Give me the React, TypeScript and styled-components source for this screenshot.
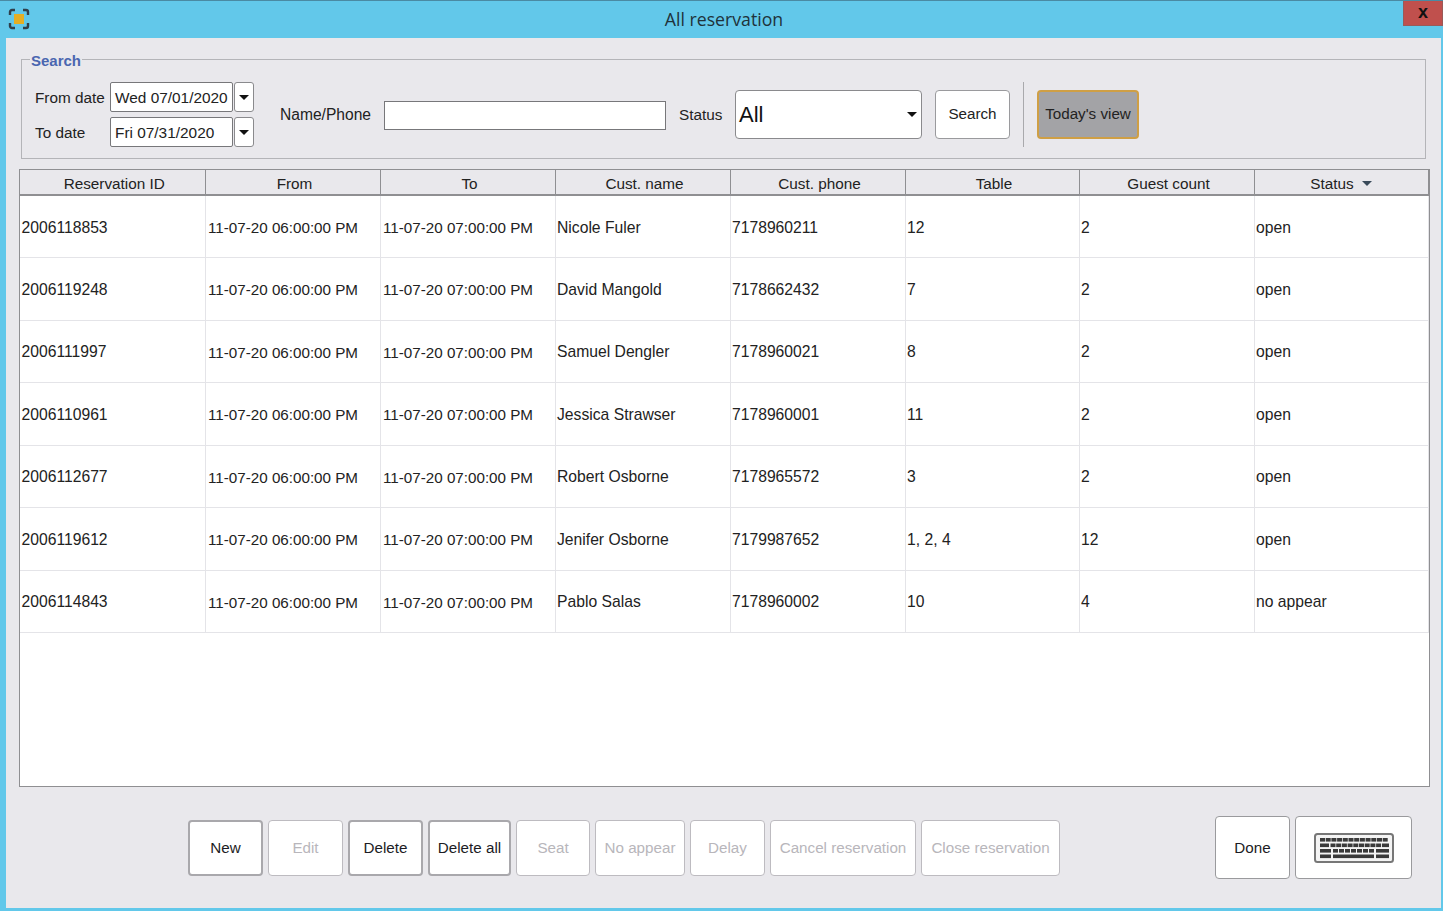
import React from "react";
import styled, { createGlobalStyle, css } from "styled-components";

const GlobalStyle = createGlobalStyle`
  html, body {
    margin: 0;
    padding: 0;
    background: #62c8ea;
    font-family: "Liberation Sans", Arial, sans-serif;
  }
`;

const Window = styled.div`
  width: 1443px;
  height: 911px;
  display: flex;
  flex-direction: column;
  box-sizing: border-box;
  background: #62c8ea;
  overflow: hidden;
`;

const TitleBar = styled.div`
  height: 38px;
  flex: none;
  box-sizing: border-box;
  border-top: 1px solid #4a8aa3;
  display: grid;
  grid-template-columns: 1fr auto 1fr;
  align-items: start;
`;

const TitleIcon = styled.svg`
  display: block;
  margin: 7px 0 0 8px;
`;

const Title = styled.div`
  font-family: "Open Sans", sans-serif;
  font-size: 17.7px;
  line-height: 36px;
  color: #20323a;
  padding-left: 5px;
`;

const CloseButton = styled.div`
  justify-self: end;
  width: 40px;
  height: 25px;
  background: #c0504d;
  border: 1px solid #9a5a58;
  border-top: none;
  box-sizing: border-box;
  color: #111;
  font-size: 18px;
  font-weight: 700;
  line-height: 22px;
  text-align: center;
`;

const Panel = styled.div`
  flex: 1;
  margin: 0 2px 3px 6px;
  background: #e9e8ec;
  display: flex;
  flex-direction: column;
  padding: 10px 11px 0 13px;
  min-height: 0;
`;

const SearchGroup = styled.fieldset`
  margin: 0 4px 0 2px;
  padding: 0 0 0 13px;
  height: 111px;
  box-sizing: border-box;
  border: 1px solid #b4b4b8;
  display: flex;
  align-items: flex-start;
  min-width: 0;
`;

const SearchLegend = styled.legend`
  margin-left: -5px;
  padding: 4px 1px 0;
  color: #4a66b0;
  font-size: 15px;
  font-weight: 700;
  line-height: 18px;
`;

const SearchRow = styled.div`
  display: flex;
  align-items: center;
  height: 65px;
  margin-top: 12px;
`;

const DateGrid = styled.div`
  display: grid;
  grid-template-columns: 75px 123px 21px;
  grid-auto-rows: 30px;
  row-gap: 5px;
  align-items: center;
  width: 245px;
`;

const Label = styled.span`
  font-size: 15.3px;
  color: #222;
  white-space: nowrap;
`;

const DateLabel = styled(Label)`
  padding-top: 2px;
`;

const DateField = styled.div`
  height: 30px;
  box-sizing: border-box;
  background: #fff;
  border: 1px solid #77777a;
  border-radius: 2px;
  padding-left: 4px;
  font-size: 15.4px;
  line-height: 30px;
  color: #222;
  white-space: nowrap;
`;

const Caret = styled.span`
  width: 0;
  height: 0;
  border-left: 5px solid transparent;
  border-right: 5px solid transparent;
  border-top: 5px solid #111;
`;

const DateArrow = styled.div`
  height: 30px;
  box-sizing: border-box;
  margin-left: 1px;
  background: #fff;
  border: 1px solid #8a8a8d;
  border-radius: 3px;
  display: flex;
  align-items: center;
  justify-content: center;
`;

const NameLabel = styled(Label)`
  width: 104px;
  font-size: 15.6px;
`;

const NameInput = styled.div`
  width: 282px;
  height: 29px;
  box-sizing: border-box;
  background: #fff;
  border: 1px solid #77777a;
  margin-top: 1px;
`;

const StatusLabel = styled(Label)`
  width: 56px;
  margin-left: 13px;
`;

const StatusSelect = styled.div`
  width: 187px;
  height: 49px;
  box-sizing: border-box;
  background: #fff;
  border: 1px solid #8a8a8d;
  border-radius: 4px;
  padding: 0 4px 0 3px;
  display: flex;
  align-items: center;
  justify-content: space-between;
  font-size: 22px;
  color: #111;
`;

const buttonBase = css`
  box-sizing: border-box;
  background: #fff;
  border-radius: 4px;
  display: flex;
  align-items: center;
  justify-content: center;
  font-size: 15.2px;
  white-space: nowrap;
`;

const SearchButton = styled.div`
  ${buttonBase}
  width: 75px;
  height: 49px;
  margin-left: 13px;
  padding-bottom: 2px;
  border: 1px solid #9a9a9d;
  color: #222;
`;

const Divider = styled.div`
  width: 1px;
  height: 65px;
  background: #a9a9ac;
  margin: 0 13px;
`;

const TodayButton = styled.div`
  ${buttonBase}
  width: 102px;
  height: 49px;
  padding-bottom: 2px;
  background: #a3a3a6;
  border: 2px solid #cf9f45;
  color: #222;
`;

const TableFrame = styled.div`
  margin-top: 10px;
  height: 618px;
  flex: none;
  box-sizing: border-box;
  background: #fff;
  border: 1px solid #8f8f92;
`;

const Table = styled.table`
  width: 1408px;
  table-layout: fixed;
  border-collapse: collapse;
`;

const HeadCell = styled.th`
  height: 25px;
  padding: 4px 0 0 4px;
  box-sizing: border-box;
  background: #e9e8ec;
  border-right: 1px solid #8f8f92;
  border-bottom: 2px solid #8f8f92;
  font-size: 15.3px;
  font-weight: 400;
  color: #222;
  text-align: center;

  &:last-child {
    padding-left: 0;
  }
`;

const SortCaret = styled.span`
  display: inline-block;
  width: 0;
  height: 0;
  margin: 0 0 3px 8px;
  border-left: 5px solid transparent;
  border-right: 5px solid transparent;
  border-top: 5px solid #3a4a5a;
`;

const Cell = styled.td<{ $time?: boolean }>`
  height: 62.5px;
  padding: 2px 0 0 ${(p) => (p.$time ? "2.5px" : "1.5px")};
  box-sizing: border-box;
  border-right: 1px solid #e4e4e8;
  border-bottom: 1px solid #e4e4e8;
  font-size: ${(p) => (p.$time ? "15.2px" : "15.7px")};
  color: #222;
  white-space: nowrap;
  overflow: hidden;
`;

const Footer = styled.div`
  flex: 1;
  display: flex;
  align-items: center;
  padding: 0 18px 0 169px;
`;

const ActionGroup = styled.div`
  display: flex;
  gap: 5px;
`;

const ActionButton = styled.div<{ $width: number; $disabled?: boolean }>`
  ${buttonBase}
  width: ${(p) => p.$width}px;
  height: 56px;
  border: ${(p) => (p.$disabled ? "1px solid #bdbbc0" : "2px solid #a9a8ac")};
  color: ${(p) => (p.$disabled ? "#b8b6bb" : "#1c1c24")};
`;

const SideGroup = styled.div`
  margin-left: auto;
  display: flex;
  gap: 5px;
`;

const SideButton = styled.div<{ $width: number }>`
  ${buttonBase}
  width: ${(p) => p.$width}px;
  height: 63px;
  border: 1px solid #9a9a9d;
  color: #1c1c24;
`;

const columns = [
  { title: "Reservation ID", width: 185 },
  { title: "From", width: 175 },
  { title: "To", width: 175 },
  { title: "Cust. name", width: 175 },
  { title: "Cust. phone", width: 175 },
  { title: "Table", width: 174 },
  { title: "Guest count", width: 175 },
  { title: "Status", width: 174 },
];

const FROM = "11-07-20 06:00:00 PM";
const TO = "11-07-20 07:00:00 PM";

const rows = [
  ["2006118853", FROM, TO, "Nicole Fuler", "7178960211", "12", "2", "open"],
  ["2006119248", FROM, TO, "David Mangold", "7178662432", "7", "2", "open"],
  ["2006111997", FROM, TO, "Samuel Dengler", "7178960021", "8", "2", "open"],
  ["2006110961", FROM, TO, "Jessica Strawser", "7178960001", "11", "2", "open"],
  ["2006112677", FROM, TO, "Robert Osborne", "7178965572", "3", "2", "open"],
  ["2006119612", FROM, TO, "Jenifer Osborne", "7179987652", "1, 2, 4", "12", "open"],
  ["2006114843", FROM, TO, "Pablo Salas", "7178960002", "10", "4", "no appear"],
];

const actions = [
  { label: "New", width: 75 },
  { label: "Edit", width: 75, disabled: true },
  { label: "Delete", width: 75 },
  { label: "Delete all", width: 83 },
  { label: "Seat", width: 74, disabled: true },
  { label: "No appear", width: 90, disabled: true },
  { label: "Delay", width: 75, disabled: true },
  { label: "Cancel reservation", width: 146, disabled: true },
  { label: "Close reservation", width: 139, disabled: true },
];

const WindowIcon = () => (
  <TitleIcon width="22" height="22" viewBox="0 0 22 22" fill="none">
    <rect x="6" y="6" width="10" height="10" fill="#e5ae24" />
    <path
      d="M7 2H4a2 2 0 0 0-2 2v3M15 2h3a2 2 0 0 1 2 2v3M7 20H4a2 2 0 0 1-2-2v-3M15 20h3a2 2 0 0 0 2-2v-3"
      stroke="#2f3f4c"
      strokeWidth="2.4"
    />
  </TitleIcon>
);

const keyRow = (y: number, x: number, count: number, w: number, step: number) =>
  Array.from({ length: count }, (_, i) => (
    <rect key={`${y}-${i}`} x={x + i * step} y={y} width={w} height="3.6" />
  ));

const KeyboardIcon = () => (
  <svg width="80" height="30" viewBox="0 0 80 30">
    <rect x="1" y="1" width="78" height="28" rx="2.5" fill="#f4f4f4" stroke="#777" strokeWidth="2" />
    <g fill="#3a3a3a">
      {keyRow(5, 6, 12, 5, 5.7)}
      <rect x="6" y="10.5" width="9" height="3.6" />
      {keyRow(10.5, 16.5, 9, 5, 5.7)}
      <rect x="68" y="10.5" width="7" height="3.6" />
      <rect x="6" y="16" width="11" height="3.6" />
      {keyRow(16, 19, 7, 5, 6)}
      <rect x="62" y="16" width="13" height="3.6" />
      <rect x="6" y="21.5" width="11" height="3.6" />
      <rect x="19" y="21.5" width="41" height="3.6" />
      <rect x="62" y="21.5" width="13" height="3.6" />
    </g>
  </svg>
);

export default function App() {
  return (
    <Window>
      <GlobalStyle />
      <TitleBar>
        <WindowIcon />
        <Title>All reservation</Title>
        <CloseButton>x</CloseButton>
      </TitleBar>
      <Panel>
        <SearchGroup>
          <SearchLegend>Search</SearchLegend>
          <SearchRow>
            <DateGrid>
              <DateLabel>From date</DateLabel>
              <DateField>Wed 07/01/2020</DateField>
              <DateArrow>
                <Caret />
              </DateArrow>
              <DateLabel>To date</DateLabel>
              <DateField>Fri 07/31/2020</DateField>
              <DateArrow>
                <Caret />
              </DateArrow>
            </DateGrid>
            <NameLabel>Name/Phone</NameLabel>
            <NameInput />
            <StatusLabel>Status</StatusLabel>
            <StatusSelect>
              All
              <Caret />
            </StatusSelect>
            <SearchButton>Search</SearchButton>
            <Divider />
            <TodayButton>Today's view</TodayButton>
          </SearchRow>
        </SearchGroup>
        <TableFrame>
          <Table>
            <colgroup>
              {columns.map((c) => (
                <col key={c.title} style={{ width: c.width }} />
              ))}
            </colgroup>
            <thead>
              <tr>
                {columns.map((c) => (
                  <HeadCell key={c.title}>
                    {c.title}
                    {c.title === "Status" && <SortCaret />}
                  </HeadCell>
                ))}
              </tr>
            </thead>
            <tbody>
              {rows.map((row) => (
                <tr key={row[0]}>
                  {row.map((value, i) => (
                    <Cell key={i} $time={i === 1 || i === 2}>
                      {value}
                    </Cell>
                  ))}
                </tr>
              ))}
            </tbody>
          </Table>
        </TableFrame>
        <Footer>
          <ActionGroup>
            {actions.map((a) => (
              <ActionButton key={a.label} $width={a.width} $disabled={a.disabled}>
                {a.label}
              </ActionButton>
            ))}
          </ActionGroup>
          <SideGroup>
            <SideButton $width={75}>Done</SideButton>
            <SideButton $width={117}>
              <KeyboardIcon />
            </SideButton>
          </SideGroup>
        </Footer>
      </Panel>
    </Window>
  );
}
